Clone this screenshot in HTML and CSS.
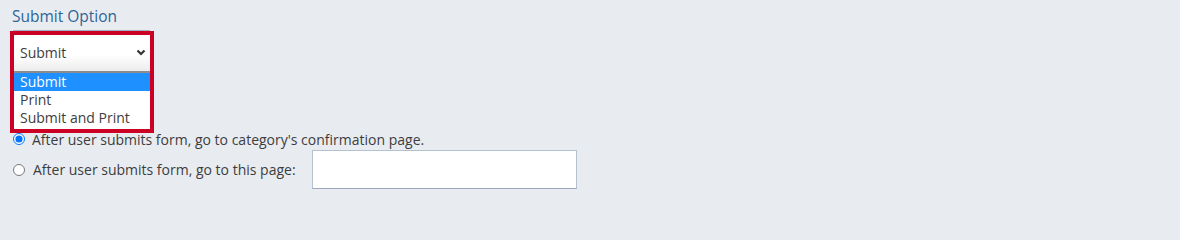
FILE: index.html
```html
<!DOCTYPE html>
<html>
<head>
<meta charset="utf-8">
<link rel="stylesheet" href="styles.css">
</head>
<body>
<div class="page">
  <div class="label">Submit Option</div>
  <div class="highlight">
    <div class="select">
      <span>Submit</span>
      <svg class="chev" width="10" height="7" viewBox="0 0 10 7"><polyline points="1.5,1.5 5,5 8.5,1.5" fill="none" stroke="#333" stroke-width="2.2"/></svg>
    </div>
    <div class="list">
      <div class="opt selected">Submit</div>
      <div class="opt">Print</div>
      <div class="opt">Submit and Print</div>
    </div>
  </div>
  <label class="row first"><input type="radio" name="r" checked><span>After user submits form, go to category's confirmation page.</span></label>
  <label class="row second"><input type="radio" name="r"><span class="txt">After user submits form, go to this page:</span><span class="field"></span></label>
</div>
</body>
</html>
```
FILE: styles.css
```css
html, body {
  margin: 0;
  padding: 0;
  background: #e8ecf1;
}
.page {
  font-family: "Open Sans", Lato, sans-serif;
  color: #3d3d3d;
  padding: 6px 0 0 10px;
}
.label {
  font-size: 15.5px;
  line-height: 20px;
  color: #2f6596;
  padding-left: 2px;
}
.highlight {
  position: relative;
  margin-top: 5px;
  width: 136px;
  height: 94px;
  border: 4px solid #cc0025;
}
.highlight::before {
  content: "";
  position: absolute;
  left: -1px;
  right: 0;
  top: -5px;
  height: 1px;
  background: #9fb0c4;
}
.select {
  height: 38px;
  display: flex;
  align-items: center;
  justify-content: space-between;
  padding: 0 4px 2px 6px;
  box-sizing: border-box;
  font-size: 14px;
  background: linear-gradient(#ffffff 55%, #ececec);
  border-bottom: 2px solid #8c8c8c;
}
.chev { display: block; }
.list {
  background: #fff;
  height: 56px;
  font-size: 14px;
}
.opt {
  height: 18px;
  line-height: 18px;
  padding-left: 6px;
}
.opt.selected {
  background: #1e90ff;
  color: #fff;
}
.row {
  display: flex;
  align-items: center;
  font-size: 14px;
  color: #3d3d3d;
}
.row input {
  margin: 0 7px 0 3px;
  width: 12px;
  height: 12px;
}
.row.first {
  height: 16px;
  margin-top: -2px;
}
.row.second {
  margin-top: 3px;
}
.row.second input {
  margin-right: 8px;
}
.field {
  display: block;
  width: 263px;
  height: 37px;
  margin-left: 16px;
  background: #fff;
  border: 1px solid #b4c1d1;
  border-bottom-color: #9aa9bb;
}
```
